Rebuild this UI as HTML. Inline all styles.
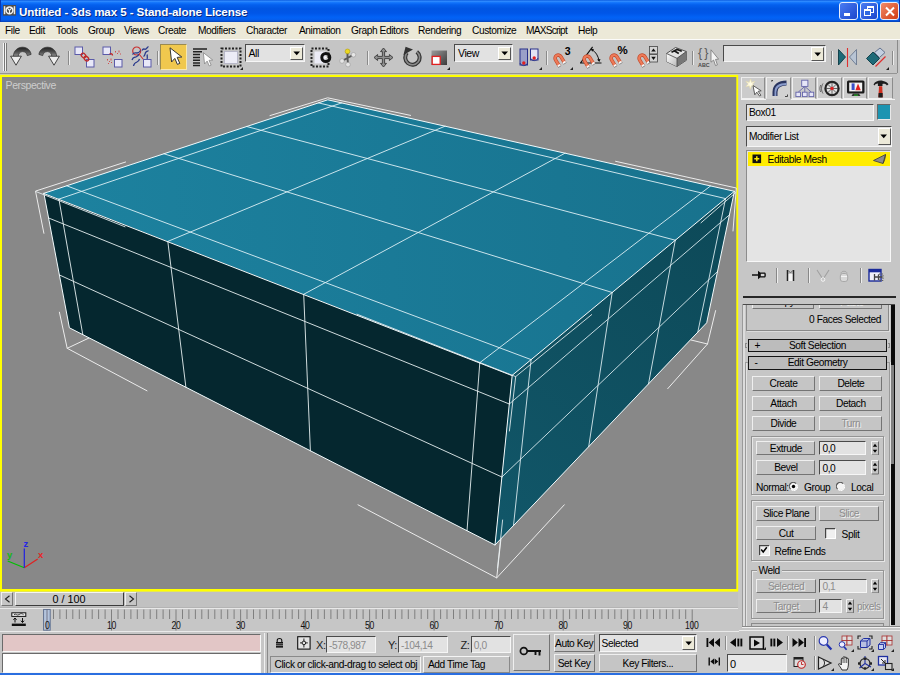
<!DOCTYPE html>
<html lang="en">
<head>
<meta charset="utf-8">
<title>Untitled - 3ds max 5 - Stand-alone License</title>
<style>
html,body{margin:0;padding:0;}
html{background:#c5c5c5;overflow:hidden;}
body{width:900px;height:675px;overflow:hidden;position:relative;background:#c5c5c5;font-family:"Liberation Sans",sans-serif;font-size:10.2px;letter-spacing:-0.42px;color:#000;}
.abs{position:absolute;}
#titlebar{left:0;top:0;width:900px;height:22px;background:linear-gradient(to bottom,#0a5be0 0%,#2f8bff 6%,#1274fb 12%,#0460ee 22%,#0055e2 40%,#0056e8 60%,#0262f6 78%,#0560f0 88%,#0650d8 95%,#0340b0 100%);}
#title{left:19px;top:5.2px;color:#fff;font-weight:bold;font-size:11.6px;letter-spacing:-0.1px;white-space:nowrap;text-shadow:1px 1px 0 #0a2a80;}
#menubar{left:0;top:22px;width:900px;height:17px;background:#ece9d8;}
#menubar span{position:absolute;top:3px;white-space:nowrap;color:#000;}
#toolbar{left:0;top:39px;width:900px;height:35px;background:#c5c5c5;}
.cb{position:absolute;top:2.2px;height:17.6px;width:18.4px;border-radius:3px;box-sizing:border-box;border:1px solid #e8eefc;}
#vp{left:0;top:74px;}
.t{position:absolute;white-space:nowrap;margin-top:0.8px;}
.btn{position:absolute;box-sizing:border-box;background:#c5c5c5;border-top:1px solid #efefef;border-left:1px solid #efefef;border-bottom:1px solid #747474;border-right:1px solid #747474;text-align:center;white-space:nowrap;}
.btn.dis{color:#8c8c8c;text-shadow:1px 1px 0 #eee;}
.fld{position:absolute;box-sizing:border-box;padding-top:1.2px;background:#e2e2e2;border-top:1.5px solid #4a4a4a;border-left:1.5px solid #4a4a4a;border-bottom:1px solid #f6f6f6;border-right:1px solid #f6f6f6;white-space:nowrap;overflow:hidden;}
.grp{position:absolute;box-sizing:border-box;border:1px solid #949494;box-shadow:1px 1px 0 #e6e6e6, inset 1px 1px 0 #e6e6e6;}
</style>
</head>
<body>
<!-- TITLE BAR -->
<div id="titlebar" class="abs"></div>
<svg class="abs" style="left:3px;top:5.2px" width="13" height="10.6" viewBox="0 0 13 10.6"><rect x="0" y="0" width="13" height="10.6" fill="#4c4c4c"/><rect x="0.8" y="1.2" width="1.5" height="8" fill="#e8e8e8"/><rect x="10.7" y="1.2" width="1.5" height="8" fill="#e8e8e8"/><circle cx="6.5" cy="5.3" r="3.4" fill="none" stroke="#f2f2f2" stroke-width="1.5"/><path d="M4.3 3.2L6.5 5.4L8.7 3.2M6.5 5.4V8.4" stroke="#f2f2f2" stroke-width="1.1" fill="none"/></svg>
<div class="abs" style="left:898.6px;top:0;width:1.4px;height:22px;background:#0a38b4"></div><div class="abs" style="left:0;top:0;width:1px;height:22px;background:#0a38b4"></div>
<div id="title" class="abs">Untitled - 3ds max 5 - Stand-alone License</div>
<div class="cb" style="left:839.2px;background:linear-gradient(135deg,#4a7cf2,#1c46cc);"><div class="abs" style="left:4px;top:10px;width:6px;height:2.4px;background:#fff"></div></div>
<div class="cb" style="left:859.6px;background:linear-gradient(135deg,#4a7cf2,#1c46cc);"><div class="abs" style="left:6px;top:3px;width:5px;height:4px;border:1.2px solid #fff;border-top-width:2px"></div><div class="abs" style="left:3px;top:6px;width:5px;height:4px;border:1.2px solid #fff;border-top-width:2px;background:#2f68e2"></div></div>
<div class="cb" style="left:880.2px;background:linear-gradient(135deg,#f08a68,#d23c14);"><svg class="abs" style="left:0.6px;top:0.6px" width="16" height="15"><path d="M4 3.5l8 8M12 3.5l-8 8" stroke="#fff" stroke-width="2"/></svg></div>

<!-- MENU BAR -->
<div id="menubar" class="abs">
<span style="left:5px">File</span><span style="left:29px">Edit</span><span style="left:56px">Tools</span><span style="left:88px">Group</span><span style="left:124px">Views</span><span style="left:158px">Create</span><span style="left:198px">Modifiers</span><span style="left:246px">Character</span><span style="left:299px">Animation</span><span style="left:351px">Graph Editors</span><span style="left:418px">Rendering</span><span style="left:472px">Customize</span><span style="left:526px;letter-spacing:-0.8px">MAXScript</span><span style="left:578px">Help</span>
</div>

<!-- TOOLBAR -->
<div id="toolbar" class="abs"></div>
<!--TB-START-->
<div class="abs" style="left:0;top:39px;width:900px;height:1.4px;background:#fbfbfa"></div>
<div class="abs" style="left:0;top:73.4px;width:897px;height:1px;background:#949494"></div>
<div class="abs" style="left:896.5px;top:40px;width:1px;height:33px;background:#8a8a8a"></div>
<div class="abs" style="left:2.5px;top:43px;width:1px;height:28px;background:#f4f4f4"></div><div class="abs" style="left:3.5px;top:43px;width:1px;height:28px;background:#777"></div><div class="abs" style="left:5px;top:43px;width:1px;height:28px;background:#f4f4f4"></div><div class="abs" style="left:6px;top:43px;width:1px;height:28px;background:#777"></div>
<svg class="abs" style="left:10px;top:46px" width="22" height="20" viewBox="0 0 22 20"><defs><linearGradient id="ug" x1="0" y1="0" x2="0" y2="1"><stop offset="0" stop-color="#1e1e1e"/><stop offset="0.6" stop-color="#5a5a5a"/><stop offset="1" stop-color="#9a9a9a"/></linearGradient></defs><path d="M3.4 10.5C3.4 4.5 8 1.2 12.5 1.2c4.5 0 8 3 8.6 7.2l-3.8 1.2C17 7.2 15 5.6 12.5 5.6c-2.4 0-4.3 1.9-4.3 4.9z" fill="url(#ug)" stroke="#2a2a2a" stroke-width=".7"/><path d="M0.6 10.2h10.8L6 19.2z" fill="#ededed" stroke="#333" stroke-width=".9"/></svg>
<svg class="abs" style="left:38px;top:46px" width="22" height="20" viewBox="0 0 22 20"><g transform="translate(22,0) scale(-1,1)"><defs><linearGradient id="rg" x1="0" y1="0" x2="0" y2="1"><stop offset="0" stop-color="#1e1e1e"/><stop offset="0.6" stop-color="#5a5a5a"/><stop offset="1" stop-color="#9a9a9a"/></linearGradient></defs><path d="M3.4 10.5C3.4 4.5 8 1.2 12.5 1.2c4.5 0 8 3 8.6 7.2l-3.8 1.2C17 7.2 15 5.6 12.5 5.6c-2.4 0-4.3 1.9-4.3 4.9z" fill="url(#rg)" stroke="#2a2a2a" stroke-width=".7"/><path d="M0.6 10.2h10.8L6 19.2z" fill="#ededed" stroke="#333" stroke-width=".9"/></g></svg>
<div class="abs" style="left:67.5px;top:50.5px;width:1px;height:14px;background:#8a8a8a"></div><div class="abs" style="left:68.5px;top:50.5px;width:1px;height:14px;background:#ececec"></div>
<svg class="abs" style="left:73px;top:45px" width="24" height="24" viewBox="0 0 24 24"><rect x="2" y="2" width="7.5" height="7.5" fill="#e8e8f8" stroke="#5a5aa8" stroke-width="1"/><rect x="13.5" y="14.5" width="7.5" height="7.5" fill="#e8e8f8" stroke="#5a5aa8" stroke-width="1"/><ellipse cx="10.5" cy="10.5" rx="2.6" ry="1.9" transform="rotate(45 10.5 10.5)" fill="none" stroke="#c02828" stroke-width="1.3"/><ellipse cx="13.4" cy="13.6" rx="2.6" ry="1.9" transform="rotate(45 13.4 13.6)" fill="none" stroke="#c02828" stroke-width="1.3"/></svg>
<svg class="abs" style="left:101px;top:45px" width="24" height="24" viewBox="0 0 24 24"><rect x="2" y="2" width="7.5" height="7.5" fill="#e8e8f8" stroke="#5a5aa8" stroke-width="1"/><rect x="13.5" y="14.5" width="7.5" height="7.5" fill="#e8e8f8" stroke="#5a5aa8" stroke-width="1"/><path d="M8.5 9c1.6-.8 3 0 3 1.5" stroke="#c02828" stroke-width="1.3" fill="none"/><g fill="#d05050"><rect x="14" y="6" width="1" height="1.5"/><rect x="16" y="8" width="1" height="1"/><rect x="17.5" y="5.5" width="1" height="2"/><rect x="19" y="8.5" width="1" height="1"/><rect x="6" y="14" width="1" height="1.5"/><rect x="8" y="16" width="1" height="1"/><rect x="9.5" y="13.5" width="1" height="2"/><rect x="7" y="18" width="1" height="1"/><rect x="10" y="17" width="1" height="1"/></g></svg>
<svg class="abs" style="left:130px;top:45px" width="24" height="24" viewBox="0 0 24 24"><circle cx="6.7" cy="6" r="4" fill="none" stroke="#c83030" stroke-width="1.2"/><path d="M2.5 9.5c1.5-2.5 3-1.5 4.5-1.5s2.5-1 3.5-2.5M2 15c1-3 2.5-2.5 4-3s2.5-1.5 3-3M3.5 21c.5-3 2-3.5 3.5-4s2-1.5 2.5-3M12 5.5c1.5-3 2.5-.5 4-1.5s1.5-2 2.5-2.5M13.5 11.5c2-1 1-3 2.5-4.5s2-.5 2.5-1.5M17.5 9.5c-1 1.5.500 2.5-.500 4.5" stroke="#2a3a8c" stroke-width="1.3" fill="none"/><path d="M9 9l4.5 5.5" stroke="#c83030" stroke-width="1.1"/><rect x="13.5" y="14.5" width="7.5" height="7.5" fill="#e8e8f8" stroke="#5a5aa8" stroke-width="1"/></svg>
<div class="abs" style="left:157px;top:50.5px;width:1px;height:14px;background:#8a8a8a"></div><div class="abs" style="left:158px;top:50.5px;width:1px;height:14px;background:#ececec"></div>
<div class="abs" style="left:160.3px;top:44.3px;width:26.8px;height:26.2px;box-sizing:border-box;background:#f0c84e;border-top:1px solid #9a8a50;border-left:1px solid #9a8a50;border-right:1px solid #f8e8b0;border-bottom:1px solid #f8e8b0"></div>
<svg class="abs" style="left:169px;top:47px" width="14" height="20" viewBox="0 0 14 20"><path d="M1 0.8l1.6 14.2 3.2-3.6 2.6 6 2.4-1-2.6-6 4.6-.4z" fill="#fff" stroke="#333" stroke-width="1"/></svg>
<svg class="abs" style="left:192px;top:47px" width="22" height="21" viewBox="0 0 22 21"><path d="M1 2h14M1 4.8h9M1 7.6h7M1 10.4h7M1 13.2h7M1 16h7M1 18.6h7" stroke="#222" stroke-width="1.5"/><g transform="translate(10.5,5) scale(.8)"><path d="M1 0.8l1.6 14.2 3.2-3.6 2.6 6 2.4-1-2.6-6 4.6-.4z" fill="#fff" stroke="#888" stroke-width="1"/></g></svg>
<svg class="abs" style="left:219.5px;top:46.5px" width="22" height="21" viewBox="0 0 22 21"><rect x="1.5" y="1.5" width="19" height="18" fill="none" stroke="#222" stroke-width="2" stroke-dasharray="2 1.5"/><rect x="4.5" y="4.5" width="13" height="12" fill="#ececf6" stroke="#b0b0c4" stroke-width=".8"/></svg>
<svg class="abs" style="left:240px;top:67px" width="3" height="3" viewBox="0 0 3 3"><path d="M3 0v3H0z" fill="#222"/></svg>
<div class="fld" style="left:244.5px;top:44px;width:60px;height:17.8px;line-height:14.3px;padding-left:3px;font-size:10.5px">All</div>
<div class="abs" style="left:290px;top:46.6px;width:13px;height:13.3px;box-sizing:border-box;background:#ece9d8;border-top:1px solid #fff;border-left:1px solid #fff;border-right:1px solid #555;border-bottom:1px solid #555"></div>
<svg class="abs" style="left:292.8px;top:50.9px" width="8" height="5" viewBox="0 0 8 5"><path d="M0.4 0.4h6.6L3.7 4.2z" fill="#000"/></svg>
<svg class="abs" style="left:309.5px;top:46.5px" width="22" height="21" viewBox="0 0 22 21"><rect x="1.5" y="1.5" width="17" height="18" fill="none" stroke="#222" stroke-width="2" stroke-dasharray="2 1.5"/><rect x="4.5" y="4.5" width="11" height="12" fill="#ececf6"/><circle cx="15.8" cy="10.5" r="4" fill="none" stroke="#111" stroke-width="3"/><circle cx="15.8" cy="10.5" r="1" fill="#fff"/></svg>
<svg class="abs" style="left:339px;top:47.5px" width="18" height="20" viewBox="0 0 18 20"><path d="M8.5 3.5v6.5M8.5 10l-5.3 2.8M8.5 10l5.8-3.2M8.5 10l.5 6.2" stroke="#5a5a5a" stroke-width="1.9" fill="none"/><circle cx="8.5" cy="3.4" r="2.4" fill="#ecd820" stroke="#a89400" stroke-width=".5"/><circle cx="3" cy="13" r="2.3" fill="#e6e6e6" stroke="#909090" stroke-width=".5"/><circle cx="14.5" cy="6.8" r="2.3" fill="#e6e6e6" stroke="#909090" stroke-width=".5"/><circle cx="9" cy="16.6" r="2.3" fill="#e6e6e6" stroke="#909090" stroke-width=".5"/></svg>
<div class="abs" style="left:366.5px;top:50.5px;width:1px;height:14px;background:#8a8a8a"></div><div class="abs" style="left:367.5px;top:50.5px;width:1px;height:14px;background:#ececec"></div>
<svg class="abs" style="left:373px;top:46.5px" width="21" height="21" viewBox="0 0 21 21"><path d="M10.5 1l3 3.6h-1.9v4.8h4.8V7.5l3.6 3-3.6 3v-1.9h-4.8v4.8h1.9l-3 3.6-3-3.6h1.9v-4.8H4.6v1.9l-3.6-3 3.6-3v1.9h4.8V4.6H7.5z" fill="#8e8e8e" stroke="#3a3a3a" stroke-width=".9"/></svg>
<svg class="abs" style="left:400.5px;top:46px" width="21" height="22" viewBox="0 0 21 22"><path d="M6 6.8A7.2 7.2 0 1 0 15.8 5.8" fill="none" stroke="#333" stroke-width="4"/><path d="M6 6.8A7.2 7.2 0 1 0 15.8 5.8" fill="none" stroke="#8a8a8a" stroke-width="1.6"/><path d="M2.4 9L4.6 0.8l7.4 2.6z" fill="#333"/></svg>
<svg class="abs" style="left:430.5px;top:49.5px" width="17" height="16" viewBox="0 0 17 16"><defs><linearGradient id="sg" x1="0" y1="0" x2="1" y2="1"><stop offset="0" stop-color="#9a9a9a"/><stop offset="1" stop-color="#3a3a3a"/></linearGradient></defs><rect x="0.5" y="0.5" width="15.5" height="14.5" fill="url(#sg)"/><rect x="1.2" y="6.4" width="8" height="8" fill="#fff" stroke="#e02020" stroke-width="1.3"/></svg>
<svg class="abs" style="left:447px;top:67px" width="3" height="3" viewBox="0 0 3 3"><path d="M3 0v3H0z" fill="#222"/></svg>
<div class="fld" style="left:454px;top:44.3px;width:58.5px;height:18px;line-height:14.5px;padding-left:3px;font-size:10.5px">View</div>
<div class="abs" style="left:498px;top:46.9px;width:13px;height:13.5px;box-sizing:border-box;background:#ece9d8;border-top:1px solid #fff;border-left:1px solid #fff;border-right:1px solid #555;border-bottom:1px solid #555"></div>
<svg class="abs" style="left:500.8px;top:51.3px" width="8" height="5" viewBox="0 0 8 5"><path d="M0.4 0.4h6.6L3.7 4.2z" fill="#000"/></svg>
<svg class="abs" style="left:519px;top:47.5px" width="21" height="20" viewBox="0 0 21 20"><rect x="1" y="1" width="7.5" height="16" fill="#9aa0c8" stroke="#28308a" stroke-width="1"/><rect x="11.5" y="1" width="7.5" height="11" fill="#e4e4f4" stroke="#28308a" stroke-width="1"/><path d="M1 15c1 3.5 6.5 3.5 7.5 0M11.5 10c1 3.5 6.5 3.5 7.5 0" fill="none" stroke="#28308a" stroke-width=".9"/><circle cx="4.8" cy="15" r="1.7" fill="#e02020"/><circle cx="15.2" cy="10" r="1.7" fill="#e02020"/></svg>
<svg class="abs" style="left:539px;top:67px" width="3" height="3" viewBox="0 0 3 3"><path d="M3 0v3H0z" fill="#222"/></svg>
<div class="abs" style="left:545.5px;top:50.5px;width:1px;height:14px;background:#8a8a8a"></div><div class="abs" style="left:546.5px;top:50.5px;width:1px;height:14px;background:#ececec"></div>
<svg class="abs" style="left:549.9px;top:50.2px" width="18" height="18" viewBox="0 0 18 18"><g transform="translate(9,9.5) rotate(-31)"><path d="M-3.1 5.5V-1.5A3.1 3.1 0 0 1 3.1 -1.5V5.5" stroke="#c24c2e" stroke-width="3.6" fill="none"/><path d="M-3.1 5.5V-1.5A3.1 3.1 0 0 1 3.1 -1.5V5.5" stroke="#ee7a58" stroke-width="2.2" fill="none"/><path d="M-3.1 4.3V6.4M3.1 4.3V6.4" stroke="#f6f6f6" stroke-width="3"/><path d="M-4.9 6.4h3.6M1.3 6.4h3.6" stroke="#666" stroke-width=".6"/></g></svg>
<div class="t" style="left:564.8px;top:44.4px;font-weight:bold;font-size:10.5px;letter-spacing:0">3</div>
<svg class="abs" style="left:570px;top:67px" width="3" height="3" viewBox="0 0 3 3"><path d="M3 0v3H0z" fill="#222"/></svg>
<svg class="abs" style="left:578px;top:45px" width="26" height="23" viewBox="0 0 26 23"><path d="M2 18h21.5M2.6 17.8L14.6 1.8" stroke="#111" stroke-width="1.1" fill="none"/><path d="M13.6 4.4c4.2 2.4 6.6 6.4 7.4 11.4" stroke="#111" stroke-width="1" fill="none"/><path d="M12.6 3.8l3.4.2-1.8 2.8zM21.3 17l-2.2-2.6 3.4-.4z" fill="#111"/></svg>
<svg class="abs" style="left:578.5px;top:50.6px" width="18" height="18" viewBox="0 0 18 18"><g transform="translate(9,9.5) rotate(-31)"><path d="M-3.1 5.5V-1.5A3.1 3.1 0 0 1 3.1 -1.5V5.5" stroke="#c24c2e" stroke-width="3.6" fill="none"/><path d="M-3.1 5.5V-1.5A3.1 3.1 0 0 1 3.1 -1.5V5.5" stroke="#ee7a58" stroke-width="2.2" fill="none"/><path d="M-3.1 4.3V6.4M3.1 4.3V6.4" stroke="#f6f6f6" stroke-width="3"/><path d="M-4.9 6.4h3.6M1.3 6.4h3.6" stroke="#666" stroke-width=".6"/></g></svg>
<svg class="abs" style="left:606.4px;top:50.2px" width="18" height="18" viewBox="0 0 18 18"><g transform="translate(9,9.5) rotate(-31)"><path d="M-3.1 5.5V-1.5A3.1 3.1 0 0 1 3.1 -1.5V5.5" stroke="#c24c2e" stroke-width="3.6" fill="none"/><path d="M-3.1 5.5V-1.5A3.1 3.1 0 0 1 3.1 -1.5V5.5" stroke="#ee7a58" stroke-width="2.2" fill="none"/><path d="M-3.1 4.3V6.4M3.1 4.3V6.4" stroke="#f6f6f6" stroke-width="3"/><path d="M-4.9 6.4h3.6M1.3 6.4h3.6" stroke="#666" stroke-width=".6"/></g></svg>
<div class="t" style="left:617.6px;top:43.2px;font-weight:bold;font-size:11.5px;letter-spacing:0">%</div>
<svg class="abs" style="left:634px;top:50.2px" width="18" height="18" viewBox="0 0 18 18"><g transform="translate(9,9.5) rotate(-31)"><path d="M-3.1 5.5V-1.5A3.1 3.1 0 0 1 3.1 -1.5V5.5" stroke="#c24c2e" stroke-width="3.6" fill="none"/><path d="M-3.1 5.5V-1.5A3.1 3.1 0 0 1 3.1 -1.5V5.5" stroke="#ee7a58" stroke-width="2.2" fill="none"/><path d="M-3.1 4.3V6.4M3.1 4.3V6.4" stroke="#f6f6f6" stroke-width="3"/><path d="M-4.9 6.4h3.6M1.3 6.4h3.6" stroke="#666" stroke-width=".6"/></g></svg>
<svg class="abs" style="left:649px;top:46px" width="9" height="16.5" viewBox="0 0 9 16.5"><rect x="0.5" y="0.5" width="8" height="7.4" fill="#d4d4d4" stroke="#444" stroke-width=".8"/><rect x="0.5" y="8.6" width="8" height="7.4" fill="#d4d4d4" stroke="#444" stroke-width=".8"/><path d="M2.2 5.6L4.5 2.4l2.3 3.2zM2.2 10.8l2.3 3.2 2.3-3.2z" fill="#111"/></svg>
<svg class="abs" style="left:664.5px;top:46px" width="23" height="22" viewBox="0 0 23 22"><defs><linearGradient id="kg" x1="0" y1="0" x2="1" y2="1"><stop offset="0" stop-color="#ffffff"/><stop offset="1" stop-color="#b8b8b8"/></linearGradient></defs><path d="M1.5 7.5L10.5 1.5l10.8 4v8.8L12 20.5 1.5 15.5z" fill="#e4e4e4" stroke="#444" stroke-width=".9"/><path d="M1.5 7.5l10.5 4.8v8.2L1.5 15.5z" fill="url(#kg)"/><path d="M12 12.3l9.3-6.8v8.8L12 20.5z" fill="#777"/><path d="M1.5 7.5l10.5 4.8 9.3-6.8M12 12.3v8.2" stroke="#444" stroke-width=".8" fill="none"/><path d="M6.5 6.2l5.5-2.8 4.8 1.8M9.2 4.8l4.6 2.8" stroke="#1a1a1a" stroke-width="1.7" fill="none"/></svg>
<div class="abs" style="left:691.5px;top:50.5px;width:1px;height:14px;background:#8a8a8a"></div><div class="abs" style="left:692.5px;top:50.5px;width:1px;height:14px;background:#ececec"></div>
<div class="t" style="left:698px;top:45.5px;font-size:12.5px;letter-spacing:2px;color:#5a5a5a">{}</div>
<div class="t" style="left:698px;top:61.5px;font-size:5.4px;font-weight:bold;letter-spacing:0;color:#4a4a4a">ABC</div>
<svg class="abs" style="left:710px;top:48.5px" width="9" height="19" viewBox="0 0 9 19"><path d="M1 0.8v12.4l2.6-2.2 1.9 5.6 1.9-.7-1.9-5.5 3.1-.2z" fill="#f4f4f4" stroke="#777" stroke-width=".8"/></svg>
<div class="fld" style="left:722.5px;top:44.5px;width:103.5px;height:17.8px"></div>
<div class="abs" style="left:811px;top:47px;width:13px;height:13.5px;box-sizing:border-box;background:#ece9d8;border-top:1px solid #fff;border-left:1px solid #fff;border-right:1px solid #555;border-bottom:1px solid #555"></div>
<svg class="abs" style="left:813.8px;top:51.5px" width="8" height="5" viewBox="0 0 8 5"><path d="M0.4 0.4h6.6L3.7 4.2z" fill="#000"/></svg>
<div class="abs" style="left:830.5px;top:50.5px;width:1px;height:14px;background:#8a8a8a"></div><div class="abs" style="left:831.5px;top:50.5px;width:1px;height:14px;background:#ececec"></div>
<svg class="abs" style="left:837px;top:47.5px" width="21" height="19" viewBox="0 0 21 19"><path d="M1.5 1.5L8.5 9 1.5 17z" fill="#1e6a78" stroke="#0a3a44" stroke-width=".9"/><path d="M19.5 1.5L12.5 9l7 8z" fill="#b8c4d4" stroke="#6a7890" stroke-width=".9"/><path d="M10.5 0v19" stroke="#e03030" stroke-width="1.1"/></svg>
<svg class="abs" style="left:865px;top:46.5px" width="22" height="21" viewBox="0 0 22 21"><path d="M1.5 11.5L8 5l6.5 6.5L8 18z" fill="#1e6a78" stroke="#0a3a44" stroke-width=".9"/><path d="M9.5 5.5L15 1l5 4.5-5.5 5z" fill="#c4d0e0" stroke="#5a6a88" stroke-width=".9"/><path d="M10.5 19.5L20.5 9.5" stroke="#e03030" stroke-width="1.2"/></svg>
<svg class="abs" style="left:885.5px;top:67px" width="3" height="3" viewBox="0 0 3 3"><path d="M3 0v3H0z" fill="#222"/></svg>
<div class="abs" style="left:891.5px;top:50.5px;width:1px;height:14px;background:#8a8a8a"></div><div class="abs" style="left:892.5px;top:50.5px;width:1px;height:14px;background:#ececec"></div>
<!--TB-END-->

<!-- VIEWPORT -->
<svg id="vp" class="abs" width="739" height="518" viewBox="0 74 739 518">
<rect x="0" y="74.8" width="738.2" height="516.8" fill="#ffff00"/>
<rect x="2" y="77" width="734.3" height="512" fill="#888888"/>
<g stroke-linecap="round" stroke-linejoin="round">
<!-- bounding-box selection brackets (behind mesh) -->
<g stroke="#ececec" stroke-width="1" fill="none">
<path d="M125.6 162L35.5 191.1L43.9 233.3"/>
<path d="M59.4 312.2L67.2 348.3L147 390.8M67.2 348.3L89.4 337.8"/>
<path d="M358 504.8L496.7 577.9L564.3 504.8M496.7 577.9L503 520"/>
<path d="M715.6 310.6L707.5 344L667.7 388.7M707.5 344L691 340"/>
<path d="M270 115.6L327.6 97.8L410.6 115.4"/>
<path d="M615.6 161.3L736.3 188L733 231"/>
</g>
<!-- faces -->
<defs><linearGradient id="gt" gradientUnits="userSpaceOnUse" x1="44" y1="230" x2="734" y2="200"><stop offset="0" stop-color="#1d829f"/><stop offset="0.5" stop-color="#1a7a97"/><stop offset="1" stop-color="#18728d"/></linearGradient><linearGradient id="gr" gradientUnits="userSpaceOnUse" x1="500" y1="520" x2="730" y2="200"><stop offset="0" stop-color="#115668"/><stop offset="1" stop-color="#0d4958"/></linearGradient></defs>
<polygon points="43.9,193.3 327.8,99.8 734.4,191.3 512.2,375.3" fill="url(#gt)"/>
<polygon points="43.9,193.3 512.2,375.3 495,545 69.4,327.8" fill="#05272f"/>
<polygon points="512.2,375.3 734.4,191.3 706.7,322.8 495,545" fill="url(#gr)"/>
<!-- top-face grid -->
<g stroke="#e2f3f7" stroke-width="1" fill="none" stroke-opacity="0.88">
<path d="M58.9 199.1L341.7 102.9M167.8 241.4L445 126.2M303.7 294.3L565 153.2M479.8 362.7L710.6 185.9"/>
<path d="M66.7 185.8L531.1 359.6M163.9 153.8L612.2 292.5M246.7 126.5L675.3 240.2M318.5 102.9L725.6 198.6"/>
</g>
<!-- left-face grid -->
<g stroke="#e6eef0" stroke-width="1" fill="none" stroke-opacity="0.9">
<path d="M58.9 199.1L82.8 334.6M167.8 241.4L185.9 387.2M303.7 294.3L310.4 450.8M479.8 362.7L467 530.7"/>
<path d="M48.6 218L509.3 404M59.5 275L501.9 477"/>
</g>
<!-- right-face grid -->
<g stroke="#dcecf0" stroke-width="1" fill="none" stroke-opacity="0.88">
<path d="M531.1 359.6L513.5 525.5M612.2 292.5L588.7 446.6M675.3 240.2L648.5 383.9M725.6 198.6L697.8 332.1"/>
<path d="M509.3 404L729.4 214.9M501.9 477L717.2 271.8"/>
</g>
<!-- outline -->
<g stroke="#f2fafc" stroke-width="1" fill="none">
<path d="M43.9 193.3L327.8 99.8L734.4 191.3L512.2 375.3Z"/>
<path d="M43.9 193.3L69.4 327.8L495 545L706.7 322.8L734.4 191.3M512.2 375.3L495 545"/>
</g>
<!-- brackets in front of mesh -->
<g stroke="#e8f0f2" stroke-width="1" fill="none" stroke-opacity="0.85">
<path d="M36 191.6L125 226.8"/>
<path d="M357 314.2L515.7 376.6L509.4 431M515.7 376.6L591.7 314.6"/>
<path d="M701 222.8L735.6 192.6"/>
<path d="M497.5 568L502.6 520"/>
</g>
</g>
<!-- viewport label -->
<text x="5.6" y="88.9" font-family="Liberation Sans, sans-serif" font-size="10.5" fill="#cdcdcd">Perspective</text>
<!-- axis tripod -->
<g stroke-width="1.2" fill="none">
<path d="M24.3 567.7L7.7 561" stroke="#00c000"/>
<path d="M24.3 567.7L37.7 559" stroke="#e02020"/>
<path d="M24.3 567.7L24.3 548.4" stroke="#2020e0"/>
</g>
<g font-family="Liberation Sans, sans-serif" font-size="9.5" font-weight="bold">
<text x="23.6" y="546.6" fill="#2626e6">z</text>
<text x="38" y="557.6" fill="#e62626">x</text>
<text x="7" y="558" fill="#12b812">y</text>
</g>

</svg>

<!-- COMMAND PANEL -->
<!--CP-START-->
<div class="abs" style="left:739px;top:74px;width:161px;height:554px;background:#c6c6c6"></div>
<div class="abs" style="left:740.6px;top:77.4px;width:24.6px;height:21.6px;box-sizing:border-box;background:#cbcbcb;border-left:1px solid #f0f0f0;border-top:1px solid #ececec;border-right:1px solid #8c8c8c;border-bottom:1px solid #f0f0f0"></div>
<div class="abs" style="left:766.4px;top:77.4px;width:24.6px;height:21.6px;box-sizing:border-box;background:#d2d2d2;border-left:1px solid #f0f0f0;border-top:1px solid #ececec;border-right:1px solid #8c8c8c;border-bottom:1px solid #d2d2d2"></div>
<div class="abs" style="left:791.8px;top:77.4px;width:24.6px;height:21.6px;box-sizing:border-box;background:#cbcbcb;border-left:1px solid #f0f0f0;border-top:1px solid #ececec;border-right:1px solid #8c8c8c;border-bottom:1px solid #f0f0f0"></div>
<div class="abs" style="left:817.2px;top:77.4px;width:24.6px;height:21.6px;box-sizing:border-box;background:#cbcbcb;border-left:1px solid #f0f0f0;border-top:1px solid #ececec;border-right:1px solid #8c8c8c;border-bottom:1px solid #f0f0f0"></div>
<div class="abs" style="left:842.6px;top:77.4px;width:24.6px;height:21.6px;box-sizing:border-box;background:#cbcbcb;border-left:1px solid #f0f0f0;border-top:1px solid #ececec;border-right:1px solid #8c8c8c;border-bottom:1px solid #f0f0f0"></div>
<div class="abs" style="left:868.2px;top:77.4px;width:24.6px;height:21.6px;box-sizing:border-box;background:#cbcbcb;border-left:1px solid #f0f0f0;border-top:1px solid #ececec;border-right:1px solid #8c8c8c;border-bottom:1px solid #f0f0f0"></div>
<svg class="abs" style="left:741px;top:78px" width="24" height="20" viewBox="0 0 24 20"><path d="M9.5 1l1 3.4 3.4-1-2.4 2.6 2.2 2.6-3.4-.8-1 3.4-1-3.4-3.4.8 2.4-2.6-2.4-2.6 3.4 1z" fill="#fffbe4" stroke="#e8dca0" stroke-width=".5"/><path d="M12 7.5l1.8 9.3 2-2.6 2.8 3.9 1.3-.9-2.8-3.9 3.1-.5z" fill="#fff" stroke="#444" stroke-width=".85"/></svg>
<svg class="abs" style="left:770.5px;top:78.5px" width="18" height="18" viewBox="0 0 18 18"><path d="M4 17V13C4 7.5 8 4 15.5 4" stroke="#2a3560" stroke-width="5" fill="none"/><path d="M4.4 17V13C4.4 8.2 8.2 5 15.5 5" stroke="#8a9ccc" stroke-width="1.8" fill="none"/><path d="M0.5 1.5h1.5M0.8 1.5v1.2M14 17.5h2.5v-2" stroke="#333" stroke-width=".9" fill="none"/></svg>
<svg class="abs" style="left:792.5px;top:77.5px" width="24" height="21" viewBox="0 0 24 21"><g stroke="#6464aa" stroke-width=".9" fill="#e6e6f8"><path d="M11.8 8.4L5.2 14.2M11.8 8.4v5.8M11.8 8.4l6.6 5.8" fill="none"/><rect x="8.7" y="2.2" width="6.2" height="6.2"/><rect x="2.9" y="14.2" width="4.6" height="4.4"/><rect x="9.5" y="14.2" width="4.6" height="4.4"/><rect x="16.1" y="14.2" width="4.6" height="4.4"/></g></svg>
<svg class="abs" style="left:818px;top:77.5px" width="24" height="21" viewBox="0 0 24 21"><path d="M5 5.5c-2 3-2 7 0 10M2.8 7c-1.2 2.2-1.2 5 0 7" stroke="#555" stroke-width=".9" fill="none"/><circle cx="14" cy="10.5" r="6.6" fill="#e0e0e0" stroke="#222" stroke-width="2.2"/><path d="M14 4.5v12M8 10.5h12M9.8 6.3l8.4 8.4M18.2 6.3l-8.4 8.4" stroke="#444" stroke-width=".8"/><circle cx="14" cy="10.5" r="1.7" fill="#e02020"/></svg>
<svg class="abs" style="left:843.5px;top:77.5px" width="24" height="21" viewBox="0 0 24 21"><rect x="3" y="2.5" width="17.5" height="13" rx="1.5" fill="#1a1a1a"/><rect x="5.2" y="4.6" width="13" height="8.8" fill="#f4f4f4"/><rect x="7.6" y="5.4" width="3" height="6.6" fill="#3a50c8"/><path d="M14 5.6l2.8 6.6h-5.4z" fill="#e02020"/><path d="M9 15.5h6l1.5 2.6h-9z" fill="#333"/><rect x="10" y="16.6" width="4" height="1" fill="#20c020"/></svg>
<svg class="abs" style="left:869px;top:77.5px" width="24" height="21" viewBox="0 0 24 21"><path d="M4.5 6.5c2-3.6 6-4.4 9.6-3.6 2.6.6 4.6 1.6 5.4 3.4l-1.6 1.2c-1.2-1.6-2.8-1.8-4.4-1.6v2.2h-4.6V5.6C7.6 5.4 6.4 6.2 5.6 7.4z" fill="#1e1e1e"/><path d="M10 8.2h3.2l.6 11h-4.4z" fill="#d03020"/><path d="M9.6 15h4v4.4h-4.2z" fill="#1e1e1e"/></svg>
<div class="abs" style="left:741px;top:98.6px;width:25px;height:1px;background:#f2f2f2"></div>
<div class="abs" style="left:791px;top:98.6px;width:104px;height:1px;background:#f2f2f2"></div>
<div class="fld" style="left:746px;top:104px;width:127.6px;height:16.6px;line-height:14.8px;padding-left:2px;">Box01</div>
<div class="abs" style="left:877.4px;top:104px;width:14px;height:16.4px;background:#1c94b1;box-sizing:border-box;border-top:1px solid #666;border-left:1px solid #666;border-bottom:1px solid #e8e8e8;border-right:1px solid #e8e8e8"></div>
<div class="fld" style="left:746px;top:126px;width:146px;height:20.5px;line-height:18.7px;padding-left:2px;">Modifier List</div>
<div class="abs" style="left:877.6px;top:128.4px;width:13px;height:16.4px;box-sizing:border-box;background:#ece9d8;border-top:1px solid #fff;border-left:1px solid #fff;border-right:1px solid #555;border-bottom:1px solid #555"></div>
<svg class="abs" style="left:880.4px;top:134.4px" width="8" height="5" viewBox="0 0 8 5"><path d="M0.4 0.4h6.6L3.7 4.2z" fill="#000"/></svg>
<div class="abs" style="left:746.4px;top:149.8px;width:144.6px;height:112px;box-sizing:border-box;background:#e4e4e4;border-top:1px solid #8c8c8c;border-left:1px solid #8c8c8c;border-right:1px solid #f8f8f8;border-bottom:1px solid #f8f8f8"></div>
<div class="abs" style="left:748px;top:151.6px;width:142px;height:14.2px;background:#ffec00"></div>
<svg class="abs" style="left:752px;top:154px" width="10" height="10" viewBox="0 0 10 10"><rect x="0.5" y="0.5" width="8.6" height="8.6" fill="#111"/><path d="M2.3 4.8h5M4.8 2.3v5" stroke="#ffec00" stroke-width="1.5"/></svg>
<div class="t" style="left:767.6px;top:153.2px;">Editable Mesh</div>
<svg class="abs" style="left:872px;top:152.6px" width="16" height="12" viewBox="0 0 16 12"><path d="M1.5 7.5L13.5 1.5L11 10.5Z" fill="#8c8c8c" stroke="#444" stroke-width=".9"/><path d="M11 10.5c1.4-2.4 2.4-6 2.5-9" stroke="#333" stroke-width=".8" fill="none"/></svg>
<svg class="abs" style="left:751px;top:268px" width="18" height="14" viewBox="0 0 18 14"><path d="M1 7h6.5" stroke="#111" stroke-width="1.5"/><path d="M7 2.8v8.4l2.2-1.8h4.6c1.4 0 1.4-4.8 0-4.8H9.2z" fill="#111"/><rect x="9.8" y="5.8" width="3.6" height="2.4" fill="#d8d8d8"/></svg>
<div class="abs" style="left:776px;top:268px;width:1px;height:15px;background:#888"></div><div class="abs" style="left:777px;top:268px;width:1px;height:15px;background:#eee"></div>
<div class="abs" style="left:807.6px;top:268px;width:1px;height:15px;background:#888"></div><div class="abs" style="left:808.6px;top:268px;width:1px;height:15px;background:#eee"></div>
<div class="abs" style="left:860px;top:268px;width:1px;height:15px;background:#888"></div><div class="abs" style="left:861px;top:268px;width:1px;height:15px;background:#eee"></div>
<svg class="abs" style="left:785px;top:269px" width="12" height="14" viewBox="0 0 12 14"><path d="M2.5 1v11M8.5 1v11" stroke="#222" stroke-width="1.5"/><rect x="3.6" y="5" width="3.8" height="7" fill="#f4f4f4"/><path d="M3.3 1.5l2.2 2.5 2.2-2.5" stroke="#555" stroke-width=".8" fill="none"/></svg>
<svg class="abs" style="left:815px;top:269px" width="16" height="14" viewBox="0 0 16 14"><path d="M2 1l5.5 8.5M14 1L8.5 9.5" stroke="#a0a0a0" stroke-width="1.1" fill="none"/><circle cx="8" cy="10.5" r="1.8" fill="none" stroke="#f4f4f4" stroke-width="1"/></svg>
<svg class="abs" style="left:838px;top:269px" width="12" height="14" viewBox="0 0 12 14"><path d="M3 4.5c0-3 6-3 6 0" stroke="#a8a8a8" fill="none" stroke-width="1"/><rect x="2.3" y="4.5" width="7.4" height="8" rx="2.5" fill="#d8d8d8" stroke="#a8a8a8" stroke-width="1"/><path d="M3 7.5h6" stroke="#f4f4f4" stroke-width="1"/></svg>
<svg class="abs" style="left:868px;top:267.5px" width="17" height="16" viewBox="0 0 17 16"><rect x="1" y="1.5" width="12" height="11.5" fill="#f0f0f8" stroke="#1a2a9a" stroke-width="1.4"/><rect x="1" y="1.5" width="12" height="2.8" fill="#1a2a9a"/><path d="M6.5 6v6.5M6.5 9h8M10.5 6.5v5.5" stroke="#444" stroke-width="1.3"/><rect x="11" y="6" width="4" height="6.5" fill="none" stroke="#555" stroke-width=".9" stroke-dasharray="1.5 1"/></svg>
<div class="abs" style="left:743.4px;top:295.6px;width:152.4px;height:2.2px;background:#262626"></div>
<div class="abs" style="left:891px;top:304px;width:4px;height:320.5px;background:#0a0a0a"></div>
<div class="abs" style="left:891px;top:364.6px;width:3.2px;height:99px;background:#808080"></div>
<div class="abs" style="left:742px;top:304px;width:1px;height:322px;background:#9a9a9a"></div><div class="abs" style="left:743px;top:304px;width:1.5px;height:322px;background:#dcdcdc"></div>
<div class="abs" style="left:745.6px;top:304px;width:143.6px;height:27px;box-sizing:border-box;border:1px solid #8a8a8a;border-top:1px solid #555;box-shadow:1px 1px 0 #dcdcdc"></div>
<div class="abs" style="left:744px;top:304px;width:146px;height:6px;overflow:hidden">
<div class="btn" style="left:8.2px;top:-9px;width:62.2px;height:14px;line-height:11px">Copy</div><div class="btn dis" style="left:75.4px;top:-9px;width:63px;height:14px;line-height:11px">Paste</div></div>
<div class="abs" style="left:742.5px;top:303.8px;width:152.5px;height:1px;background:#4a4a4a"></div>
<div class="t" style="left:0px;top:313.2px;left:auto;right:19px">0 Faces Selected</div>
<div class="abs" style="left:748px;top:338.6px;width:139px;height:13.2px;box-sizing:border-box;border:1px solid #151515;background:#bcbcbc;text-align:center;line-height:11px">Soft Selection<span class="abs" style="left:5.5px;top:0">+</span></div>
<div class="abs" style="left:748px;top:356.4px;width:139px;height:13.2px;box-sizing:border-box;border:1px solid #151515;background:#bcbcbc;text-align:center;line-height:11px">Edit Geometry<span class="abs" style="left:5.5px;top:0">-</span></div>
<div class="abs" style="left:745px;top:343px;width:2px;height:5px;border-left:1px solid #888;border-top:1px solid #888;border-bottom:1px solid #888;box-sizing:border-box"></div>
<div class="abs" style="left:888px;top:343px;width:2px;height:5px;border-right:1px solid #888;border-top:1px solid #888;border-bottom:1px solid #888;box-sizing:border-box"></div>
<div class="abs" style="left:745px;top:362px;width:144.5px;height:264px;box-sizing:border-box;border-left:1px solid #9a9a9a;border-right:1px solid #9a9a9a;border-top:1px solid #9a9a9a;box-shadow:inset 1px 0 0 #e2e2e2, 1px 0 0 #e2e2e2"></div>
<div class="abs" style="left:748px;top:356.4px;width:139px;height:13.2px;box-sizing:border-box;border:1px solid #151515;background:#bcbcbc;text-align:center;line-height:11px">Edit Geometry<span class="abs" style="left:5.5px;top:0">-</span></div>
<div class="btn" style="left:752.2px;top:376.4px;width:62.6px;height:15px;line-height:14.2px;">Create</div>
<div class="btn" style="left:819.4px;top:376.4px;width:63px;height:15px;line-height:14.2px;">Delete</div>
<div class="btn" style="left:752.2px;top:395.8px;width:62.6px;height:15px;line-height:14.2px;">Attach</div>
<div class="btn" style="left:819.4px;top:395.8px;width:63px;height:15px;line-height:14.2px;">Detach</div>
<div class="btn" style="left:752.2px;top:416px;width:62.6px;height:15px;line-height:14.2px;">Divide</div>
<div class="btn dis" style="left:819.4px;top:416px;width:63px;height:15px;line-height:14.2px;">Turn</div>
<div class="grp" style="left:750.6px;top:435.6px;width:133.2px;height:59.4px"></div>
<div class="btn" style="left:756.4px;top:440.6px;width:59px;height:14.6px;line-height:13.8px;">Extrude</div>
<div class="fld" style="left:819.4px;top:440.6px;width:46.6px;height:14.6px;line-height:12.8px;padding-left:2px;">0,0</div>
<svg class="abs" style="left:870.8px;top:440.6px" width="8" height="14.5" viewBox="0 0 8 14.5"><rect x="0" y="0" width="8" height="14.5" fill="#c5c5c5"/><path d="M0.5 14.5 V0.5 H7.5" stroke="#f4f4f4" fill="none"/><path d="M7.5 0.5 V14 H0.5" stroke="#6e6e6e" fill="none"/><path d="M1.8 5.65 L4 2.6500000000000004 L6.2 5.65Z M1.8 8.85 L4 11.85 L6.2 8.85Z" fill="#000"/></svg>
<div class="btn" style="left:756.4px;top:460.4px;width:59px;height:14.6px;line-height:13.8px;">Bevel</div>
<div class="fld" style="left:819.4px;top:460.4px;width:46.6px;height:14.6px;line-height:12.8px;padding-left:2px;">0,0</div>
<svg class="abs" style="left:870.8px;top:460.4px" width="8" height="14.5" viewBox="0 0 8 14.5"><rect x="0" y="0" width="8" height="14.5" fill="#c5c5c5"/><path d="M0.5 14.5 V0.5 H7.5" stroke="#f4f4f4" fill="none"/><path d="M7.5 0.5 V14 H0.5" stroke="#6e6e6e" fill="none"/><path d="M1.8 5.65 L4 2.6500000000000004 L6.2 5.65Z M1.8 8.85 L4 11.85 L6.2 8.85Z" fill="#000"/></svg>
<div class="t" style="left:756px;top:481px;">Normal:</div>
<svg class="abs" style="left:789.4px;top:482px" width="9" height="9" viewBox="0 0 9 9"><circle cx="4.5" cy="4.5" r="3.6" fill="#f4f4f4"/><path d="M1.5 7A3.8 3.8 0 0 1 7 1.5" stroke="#555" stroke-width="1.1" fill="none"/><path d="M7.5 2A3.8 3.8 0 0 1 2 7.5" stroke="#fff" stroke-width="1" fill="none"/><circle cx="4.5" cy="4.5" r="1.7" fill="#000"/></svg>
<div class="t" style="left:804px;top:481px;">Group</div>
<svg class="abs" style="left:836px;top:482px" width="9" height="9" viewBox="0 0 9 9"><circle cx="4.5" cy="4.5" r="3.6" fill="#f4f4f4"/><path d="M1.5 7A3.8 3.8 0 0 1 7 1.5" stroke="#555" stroke-width="1.1" fill="none"/><path d="M7.5 2A3.8 3.8 0 0 1 2 7.5" stroke="#fff" stroke-width="1" fill="none"/></svg>
<div class="t" style="left:851px;top:481px;">Local</div>
<div class="grp" style="left:750.6px;top:499.6px;width:133.2px;height:61.4px"></div>
<div class="btn" style="left:756.4px;top:505.8px;width:59.4px;height:14.8px;line-height:14px;">Slice Plane</div>
<div class="btn dis" style="left:819.4px;top:505.8px;width:59.4px;height:14.8px;line-height:14px;">Slice</div>
<div class="btn" style="left:756.4px;top:525.6px;width:59.4px;height:14.8px;line-height:14px;">Cut</div>
<svg class="abs" style="left:825px;top:528px" width="11" height="11" viewBox="0 0 11 11"><rect x="0" y="0" width="11" height="11" fill="#f0f0f0"/><path d="M0.6 10.5V0.6H10.5" stroke="#444" stroke-width="1.2" fill="none"/><path d="M10.5 0.6V10.5H0.6" stroke="#fff" stroke-width="1" fill="none"/></svg>
<div class="t" style="left:841.6px;top:528px;">Split</div>
<svg class="abs" style="left:759px;top:545px" width="11" height="11" viewBox="0 0 11 11"><rect x="0" y="0" width="11" height="11" fill="#f0f0f0"/><path d="M0.6 10.5V0.6H10.5" stroke="#444" stroke-width="1.2" fill="none"/><path d="M10.5 0.6V10.5H0.6" stroke="#fff" stroke-width="1" fill="none"/><path d="M2.2 4.6l2 2.4 3.6-4.8" stroke="#000" stroke-width="1.5" fill="none"/></svg>
<div class="t" style="left:774.6px;top:545px;">Refine Ends</div>
<div class="grp" style="left:750.6px;top:570.4px;width:133.2px;height:48.6px"></div>
<div class="t" style="left:756.5px;top:564.5px;background:#c6c6c6;padding:0 2px">Weld</div>
<div class="btn dis" style="left:756.4px;top:579px;width:59.4px;height:14.4px;line-height:13.6px;">Selected</div>
<div class="fld" style="left:819.4px;top:579px;width:47.6px;height:14.4px;line-height:12.6px;padding-left:2px;color:#8c8c8c;">0,1</div>
<svg class="abs" style="left:870.8px;top:579px" width="8" height="14.4" viewBox="0 0 8 14.4"><rect x="0" y="0" width="8" height="14.4" fill="#c5c5c5"/><path d="M0.5 14.4 V0.5 H7.5" stroke="#f4f4f4" fill="none"/><path d="M7.5 0.5 V13.9 H0.5" stroke="#6e6e6e" fill="none"/><path d="M1.8 5.6 L4 2.6000000000000005 L6.2 5.6Z M1.8 8.8 L4 11.8 L6.2 8.8Z" fill="#000"/></svg>
<div class="btn dis" style="left:756.4px;top:599px;width:59.4px;height:14.4px;line-height:13.6px;">Target</div>
<div class="fld" style="left:819.4px;top:599px;width:22.4px;height:14.4px;line-height:12.6px;padding-left:2px;color:#8c8c8c;">4</div>
<svg class="abs" style="left:846.2px;top:599px" width="8" height="14.4" viewBox="0 0 8 14.4"><rect x="0" y="0" width="8" height="14.4" fill="#c5c5c5"/><path d="M0.5 14.4 V0.5 H7.5" stroke="#f4f4f4" fill="none"/><path d="M7.5 0.5 V13.9 H0.5" stroke="#6e6e6e" fill="none"/><path d="M1.8 5.6 L4 2.6000000000000005 L6.2 5.6Z M1.8 8.8 L4 11.8 L6.2 8.8Z" fill="#000"/></svg>
<div class="t" style="left:857px;top:600.5px;color:#8c8c8c;text-shadow:1px 1px 0 #eee">pixels</div>
<div class="abs" style="left:750.6px;top:622.5px;width:133.2px;height:4px;box-sizing:border-box;border:1px solid #8a8a8a;border-bottom:none"></div>
<div class="abs" style="left:742px;top:626px;width:158px;height:1px;background:#8a8a8a"></div><div class="abs" style="left:742px;top:627px;width:158px;height:1px;background:#f0f0f0"></div>
<!--CP-END-->

<!-- BOTTOM -->
<!--BT-START-->
<div class="abs" style="left:0;top:591.5px;width:739px;height:84px;background:#c6c6c6"></div>
<div class="abs" style="left:739px;top:628px;width:161px;height:47px;background:#c6c6c6"></div>
<div class="abs" style="left:0;top:592px;width:738px;height:14.5px;background:#c1c1c1"></div>
<div class="btn" style="left:0.5px;top:592.2px;width:12.6px;height:13.8px;line-height:13px;"></div>
<svg class="abs" style="left:3.5px;top:595px" width="7" height="8" viewBox="0 0 7 8"><path d="M5.5 0.8L1.5 4l4 3.2" stroke="#222" stroke-width="1.1" fill="none"/></svg>
<div class="abs" style="left:14.6px;top:592.2px;width:109px;height:13.8px;box-sizing:border-box;background:#c6c6c6;border-top:1px solid #f4f4f4;border-left:1px solid #f4f4f4;border-bottom:1.8px solid #3c3c3c;border-right:1.5px solid #3c3c3c;text-align:center;line-height:12.5px;font-size:10.8px;letter-spacing:0">0 / 100</div>
<div class="btn" style="left:124.6px;top:592.2px;width:12.6px;height:13.8px;line-height:13px;"></div>
<svg class="abs" style="left:127.6px;top:595px" width="7" height="8" viewBox="0 0 7 8"><path d="M1.5 0.8L5.5 4l-4 3.2" stroke="#222" stroke-width="1.1" fill="none"/></svg>
<div class="abs" style="left:0;top:606.6px;width:738px;height:1px;background:#b4b4b4"></div><div class="abs" style="left:0;top:607.6px;width:738px;height:1px;background:#e8e8e8"></div>
<svg class="abs" style="left:11px;top:612px" width="16" height="15" viewBox="0 0 16 15"><rect x="0.8" y="0.8" width="14" height="3.6" fill="#eee" stroke="#111" stroke-width="1"/><path d="M3 2.6c2-1.5 3 1.5 5 0s3-1 4.5 0" stroke="#111" stroke-width=".8" fill="none"/><path d="M4 6v4.5M2.4 7.8L4 6l1.6 1.8M11.5 6v4.5M9.9 8.7l1.6 1.8 1.6-1.8" stroke="#111" stroke-width="1" fill="none"/><rect x="0.8" y="11.6" width="14" height="2.4" fill="#111"/></svg>
<svg class="abs" style="left:0;top:608px" width="739" height="24" viewBox="0 608 739 24"><path d="M47 609.5V630.5M53.5 609.5V619M59.9 609.5V619M66.4 609.5V619M72.8 609.5V619M79.3 609.5V619M85.7 609.5V619M92.2 609.5V619M98.6 609.5V619M105.1 609.5V619M111.5 609.5V630.5M118 609.5V619M124.4 609.5V619M130.9 609.5V619M137.3 609.5V619M143.8 609.5V619M150.2 609.5V619M156.7 609.5V619M163.1 609.5V619M169.6 609.5V619M176 609.5V630.5M182.5 609.5V619M188.9 609.5V619M195.4 609.5V619M201.8 609.5V619M208.3 609.5V619M214.8 609.5V619M221.2 609.5V619M227.7 609.5V619M234.1 609.5V619M240.6 609.5V630.5M247 609.5V619M253.5 609.5V619M259.9 609.5V619M266.4 609.5V619M272.8 609.5V619M279.3 609.5V619M285.7 609.5V619M292.2 609.5V619M298.6 609.5V619M305.1 609.5V630.5M311.5 609.5V619M318 609.5V619M324.4 609.5V619M330.9 609.5V619M337.3 609.5V619M343.8 609.5V619M350.2 609.5V619M356.7 609.5V619M363.1 609.5V619M369.6 609.5V630.5M376.1 609.5V619M382.5 609.5V619M389 609.5V619M395.4 609.5V619M401.9 609.5V619M408.3 609.5V619M414.8 609.5V619M421.2 609.5V619M427.7 609.5V619M434.1 609.5V630.5M440.6 609.5V619M447 609.5V619M453.5 609.5V619M459.9 609.5V619M466.4 609.5V619M472.8 609.5V619M479.3 609.5V619M485.7 609.5V619M492.2 609.5V619M498.6 609.5V630.5M505.1 609.5V619M511.5 609.5V619M518 609.5V619M524.4 609.5V619M530.9 609.5V619M537.4 609.5V619M543.8 609.5V619M550.3 609.5V619M556.7 609.5V619M563.2 609.5V630.5M569.6 609.5V619M576.1 609.5V619M582.5 609.5V619M589 609.5V619M595.4 609.5V619M601.9 609.5V619M608.3 609.5V619M614.8 609.5V619M621.2 609.5V619M627.7 609.5V630.5M634.1 609.5V619M640.6 609.5V619M647 609.5V619M653.5 609.5V619M659.9 609.5V619M666.4 609.5V619M672.8 609.5V619M679.3 609.5V619M685.7 609.5V619M692.2 609.5V630.5" stroke="#777" stroke-width="0.9" fill="none"/><rect x="43.6" y="609.4" width="6.6" height="20.8" fill="#b4c4dc" stroke="#5a6a8a" stroke-width=".9"/><path d="M47 609.5V630" stroke="#667" stroke-width=".8"/><g font-family="Liberation Sans, sans-serif" font-size="11.4" fill="#111"><text transform="translate(45,628.8) scale(0.76,1)">0</text><text transform="translate(106.9,628.8) scale(0.76,1)">10</text><text transform="translate(171.4,628.8) scale(0.76,1)">20</text><text transform="translate(236,628.8) scale(0.76,1)">30</text><text transform="translate(300.5,628.8) scale(0.76,1)">40</text><text transform="translate(365,628.8) scale(0.76,1)">50</text><text transform="translate(429.5,628.8) scale(0.76,1)">60</text><text transform="translate(494,628.8) scale(0.76,1)">70</text><text transform="translate(558.6,628.8) scale(0.76,1)">80</text><text transform="translate(623.1,628.8) scale(0.76,1)">90</text><text transform="translate(685,628.8) scale(0.76,1)">100</text></g></svg>
<div class="abs" style="left:0;top:631.4px;width:739px;height:1px;background:#eaeaea"></div><div class="abs" style="left:739px;top:629.8px;width:161px;height:1px;background:#ededed"></div>
<div class="abs" style="left:1.5px;top:633.6px;width:259.5px;height:18.6px;box-sizing:border-box;background:#e2c6c6;border-top:1.5px solid #6a6a6a;border-left:1.5px solid #6a6a6a;border-bottom:1px solid #f8f8f8;border-right:1px solid #f8f8f8"></div>
<div class="abs" style="left:1.5px;top:653.4px;width:259.5px;height:19.6px;box-sizing:border-box;background:#ffffff;border-top:1.5px solid #6a6a6a;border-left:1.5px solid #6a6a6a;border-bottom:1px solid #f8f8f8;border-right:1px solid #f8f8f8"></div>
<div class="abs" style="left:263.5px;top:633px;width:1px;height:40px;background:#f0f0f0"></div><div class="abs" style="left:266.5px;top:633px;width:1px;height:40px;background:#8a8a8a"></div>
<svg class="abs" style="left:275px;top:637px" width="9" height="12" viewBox="0 0 9 12"><path d="M2.2 5V3.4c0-2.6 4.6-2.6 4.6 0V5" stroke="#111" stroke-width="1.1" fill="none"/><rect x="1" y="5" width="7" height="5.6" fill="#111"/><path d="M1 6.8h7M1 8.6h7" stroke="#ccc" stroke-width=".6"/></svg>
<svg class="abs" style="left:296.6px;top:635.6px" width="14" height="14" viewBox="0 0 14 14"><rect x="0.7" y="0.7" width="12.4" height="12.4" fill="#e4e4e4" stroke="#111" stroke-width="1.1"/><path d="M6.9 2.5v9M3 6.9h7.8" stroke="#111" stroke-width=".9"/><circle cx="6.9" cy="6.9" r="1.8" fill="#e4e4e4" stroke="#111" stroke-width=".9"/></svg>
<div class="t" style="left:316px;top:638px;font-size:11px;color:#222">X:</div>
<div class="fld" style="left:326px;top:635.6px;width:50px;height:17px;line-height:15.2px;padding-left:2px;color:#8c8c8c;">-578,987</div>
<div class="t" style="left:388px;top:638px;font-size:11px;color:#222">Y:</div>
<div class="fld" style="left:398px;top:635.6px;width:50px;height:17px;line-height:15.2px;padding-left:2px;color:#8c8c8c;">-104,14</div>
<div class="t" style="left:460.5px;top:638px;font-size:11px;color:#222">Z:</div>
<div class="fld" style="left:470.8px;top:635.6px;width:40px;height:17px;line-height:15.2px;padding-left:2px;color:#8c8c8c;">0,0</div>
<div class="abs" style="left:269.6px;top:655.6px;width:151px;height:17.8px;box-sizing:border-box;border-top:1px solid #8a8a8a;border-left:1px solid #8a8a8a;border-right:1px solid #f4f4f4;border-bottom:1px solid #f4f4f4;line-height:15.5px;padding-left:4px;white-space:nowrap;overflow:hidden">Click or click-and-drag to select obj</div>
<div class="abs" style="left:423px;top:655.6px;width:87px;height:17.8px;box-sizing:border-box;border-top:1px solid #f4f4f4;border-left:1px solid #f4f4f4;border-right:1px solid #8a8a8a;border-bottom:1px solid #8a8a8a;line-height:15.5px;padding-left:4px;white-space:nowrap;overflow:hidden">Add Time Tag</div>
<div class="btn" style="left:513px;top:633.8px;width:36.6px;height:37.4px;line-height:36.6px;"></div>
<svg class="abs" style="left:519px;top:645.5px" width="25" height="11" viewBox="0 0 25 11"><circle cx="4.8" cy="5" r="3.4" fill="none" stroke="#111" stroke-width="1.7"/><path d="M8 5h14M16.5 5v4M20.5 5v4.6" stroke="#111" stroke-width="1.9" fill="none"/></svg>
<div class="btn" style="left:553.6px;top:634px;width:41px;height:18px;line-height:17.2px;">Auto Key</div>
<div class="btn" style="left:553.6px;top:654px;width:41px;height:18px;line-height:17.2px;">Set Key</div>
<div class="fld" style="left:598.6px;top:634px;width:98.6px;height:18px;line-height:16.2px;padding-left:2px;">Selected</div>
<div class="abs" style="left:682.4px;top:636.2px;width:13px;height:14px;box-sizing:border-box;background:#ece9d8;border-top:1px solid #fff;border-left:1px solid #fff;border-right:1px solid #555;border-bottom:1px solid #555"></div>
<svg class="abs" style="left:685.4px;top:641.2px" width="8" height="5" viewBox="0 0 8 5"><path d="M0.4 0.4h6.6L3.7 4.2z" fill="#000"/></svg>
<div class="btn" style="left:598.6px;top:654px;width:98.6px;height:18px;line-height:17.2px;">Key Filters...</div>
<svg class="abs" style="left:706px;top:637px" width="16" height="11" viewBox="0 0 16 11"><rect x="0.5" y="1" width="1.8" height="9" fill="#0a0a0a"/><path d="M8 1v9L2.6 5.5zM14 1v9L8.6 5.5z" fill="#0a0a0a"/></svg>
<div class="abs" style="left:725px;top:636px;width:1px;height:14px;background:#8a8a8a"></div><div class="abs" style="left:726px;top:636px;width:1px;height:14px;background:#eee"></div>
<svg class="abs" style="left:729px;top:637px" width="15" height="11" viewBox="0 0 15 11"><path d="M7 1v9L1 5.5z" fill="#0a0a0a"/><rect x="8.4" y="1.6" width="1.9" height="7.8" fill="#0a0a0a"/><rect x="11.4" y="1.6" width="1.9" height="7.8" fill="#0a0a0a"/></svg>
<svg class="abs" style="left:749px;top:635.5px" width="16" height="14" viewBox="0 0 16 14"><rect x="1" y="1" width="13.4" height="12" fill="#d8d8d8" stroke="#0a0a0a" stroke-width="1.5"/><path d="M5 3.6v6.8L11 7z" fill="#0a0a0a"/></svg>
<svg class="abs" style="left:769px;top:637px" width="15" height="11" viewBox="0 0 15 11"><rect x="1.4" y="1.6" width="1.9" height="7.8" fill="#0a0a0a"/><rect x="4.4" y="1.6" width="1.9" height="7.8" fill="#0a0a0a"/><path d="M8 1v9l6-4.5z" fill="#0a0a0a"/></svg>
<div class="abs" style="left:787px;top:636px;width:1px;height:14px;background:#8a8a8a"></div><div class="abs" style="left:788px;top:636px;width:1px;height:14px;background:#eee"></div>
<svg class="abs" style="left:791px;top:637px" width="16" height="11" viewBox="0 0 16 11"><path d="M1.5 1v9l5.4-4.5zM7.5 1v9l5.4-4.5z" fill="#0a0a0a"/><rect x="13.2" y="1" width="1.8" height="9" fill="#0a0a0a"/></svg>
<div class="abs" style="left:813.6px;top:636px;width:1px;height:14px;background:#8a8a8a"></div><div class="abs" style="left:814.6px;top:636px;width:1px;height:14px;background:#eee"></div>
<div class="abs" style="left:813.6px;top:656px;width:1px;height:14px;background:#8a8a8a"></div><div class="abs" style="left:814.6px;top:656px;width:1px;height:14px;background:#eee"></div>
<svg class="abs" style="left:707.5px;top:657px" width="13" height="9" viewBox="0 0 13 9"><rect x="0.5" y="0.5" width="1.4" height="8" fill="#0a0a0a"/><rect x="10.6" y="0.5" width="1.4" height="8" fill="#0a0a0a"/><path d="M2.4 4.5L6 1.5v6zM10.2 4.5L6.6 1.5v6z" fill="#0a0a0a"/></svg>
<div class="fld" style="left:727px;top:654.4px;width:60px;height:17.4px;line-height:15.6px;padding-left:2px;background:#e8e8e8;font-size:11px;">0</div>
<svg class="abs" style="left:793px;top:656px" width="14" height="14" viewBox="0 0 14 14"><rect x="1" y="1.5" width="9" height="9" fill="#ddd" stroke="#222" stroke-width="1"/><rect x="1" y="1.5" width="9" height="2" fill="#222"/><circle cx="8.5" cy="8.5" r="3.8" fill="#e8e0e0" stroke="#c02020" stroke-width="1.1"/><path d="M8.5 6v2.5h2" stroke="#c02020" stroke-width=".9" fill="none"/></svg>
<svg class="abs" style="left:817px;top:635px" width="17" height="16" viewBox="0 0 17 16"><circle cx="6.5" cy="6" r="4.3" fill="#eef" stroke="#2a38b0" stroke-width="1.2"/><path d="M9.8 9.6l4.6 5" stroke="#2030b0" stroke-width="2.2"/></svg>
<svg class="abs" style="left:837px;top:635px" width="17" height="16" viewBox="0 0 17 16"><g fill="#ddd" stroke="#a83030" stroke-width=".8"><rect x="5" y="1" width="5" height="4.5"/><rect x="10" y="1" width="5" height="4.5"/><rect x="5" y="5.5" width="5" height="4.5"/><rect x="10" y="5.5" width="5" height="4.5"/></g><circle cx="5" cy="9.5" r="2.8" fill="#eef" stroke="#2a38b0" stroke-width="1"/><path d="M7 11.8l2.6 3" stroke="#2030b0" stroke-width="1.7"/></svg>
<svg class="abs" style="left:857px;top:635px" width="17" height="16" viewBox="0 0 17 16"><path d="M1 4V1h3M12 1h3v3M15 11v3h-3M4 14H1v-3" stroke="#222" stroke-width="1.1" fill="none"/><path d="M3.5 6l3-2.5h6.5v6.5l-3 2.5h-6.5z" fill="#b8c0e0" stroke="#2030a0" stroke-width="1"/><path d="M3.5 6h6.5v6.5M10 6l3-2.5" stroke="#2030a0" stroke-width="1" fill="none"/></svg>
<svg class="abs" style="left:877px;top:635px" width="17" height="16" viewBox="0 0 17 16"><g fill="#ddd" stroke="#a83030" stroke-width=".8"><rect x="5" y="1" width="5" height="4.5"/><rect x="10" y="1" width="5" height="4.5"/><rect x="5" y="5.5" width="5" height="4.5"/><rect x="10" y="5.5" width="5" height="4.5"/></g><path d="M1.5 9.5l2-1.8h5v5l-2 1.8h-5z" fill="#c8d0f0" stroke="#2030a0" stroke-width="1"/><path d="M1.5 9.5h5v5M6.5 9.5l2-1.8" stroke="#2030a0" stroke-width=".9" fill="none"/></svg>
<svg class="abs" style="left:817px;top:655px" width="17" height="16" viewBox="0 0 17 16"><path d="M1.5 2l12.5 6-12.5 6z" fill="#e0e0e0" stroke="#222" stroke-width="1.2"/><path d="M6 4.5c2 2 2 5 0 7" stroke="#222" stroke-width="1" fill="none"/></svg>
<svg class="abs" style="left:837px;top:654px" width="18" height="18" viewBox="0 0 18 18"><path d="M5 16c-1-2.5-3-4-3.5-6 .8-.8 2-.2 2.8 1V5c0-1.2 1.8-1.2 1.8 0V3.5c0-1.2 1.8-1.2 1.8 0V4c0-1.2 1.8-1.2 1.8 0v1c0-1.1 1.7-1.1 1.7 0v6c0 2-.8 3.5-1.4 5z" fill="#f4f4f4" stroke="#222" stroke-width=".9"/><path d="M6.1 5v4M7.9 4v5M9.7 5v4" stroke="#222" stroke-width=".7"/></svg>
<svg class="abs" style="left:857px;top:655px" width="17" height="16" viewBox="0 0 17 16"><circle cx="8" cy="8.5" r="5" fill="none" stroke="#222" stroke-width="1.1"/><path d="M8 1v7.5l-5.5 4.5M8 8.5l6 3.5" stroke="#2030a0" stroke-width="1.1" fill="none"/><rect x="6.5" y="2.5" width="3" height="2.4" fill="#222"/><rect x="1" y="7.3" width="2.4" height="2.4" fill="#222"/><rect x="12.6" y="7.3" width="2.4" height="2.4" fill="#222"/><rect x="6.8" y="12.3" width="2.4" height="2.4" fill="#222"/></svg>
<svg class="abs" style="left:877px;top:655px" width="17" height="16" viewBox="0 0 17 16"><rect x="1.5" y="1.5" width="9" height="8.5" fill="#e8e8f4" stroke="#2030a0" stroke-width="1.3"/><rect x="8.5" y="8.5" width="6.5" height="6" fill="#d0d0d0" stroke="#222" stroke-width="1.1"/><path d="M4 4l4 4M8 5v3H5" stroke="#222" stroke-width="1" fill="none"/></svg>
<svg class="abs" style="left:762.5px;top:647px" width="3" height="3" viewBox="0 0 3 3"><path d="M3 0v3H0z" fill="#222"/></svg>
<svg class="abs" style="left:831px;top:668px" width="3" height="3" viewBox="0 0 3 3"><path d="M3 0v3H0z" fill="#222"/></svg>
<svg class="abs" style="left:851px;top:648.5px" width="3" height="3" viewBox="0 0 3 3"><path d="M3 0v3H0z" fill="#222"/></svg>
<svg class="abs" style="left:871px;top:648.5px" width="3" height="3" viewBox="0 0 3 3"><path d="M3 0v3H0z" fill="#222"/></svg>
<svg class="abs" style="left:891px;top:648.5px" width="3" height="3" viewBox="0 0 3 3"><path d="M3 0v3H0z" fill="#222"/></svg>
<svg class="abs" style="left:871px;top:668px" width="3" height="3" viewBox="0 0 3 3"><path d="M3 0v3H0z" fill="#222"/></svg>
<svg class="abs" style="left:891px;top:668px" width="3" height="3" viewBox="0 0 3 3"><path d="M3 0v3H0z" fill="#222"/></svg>
<div class="abs" style="left:0;top:673px;width:900px;height:2px;background:#2a6ee0"></div>
<!--BT-END-->
</body>
</html>
